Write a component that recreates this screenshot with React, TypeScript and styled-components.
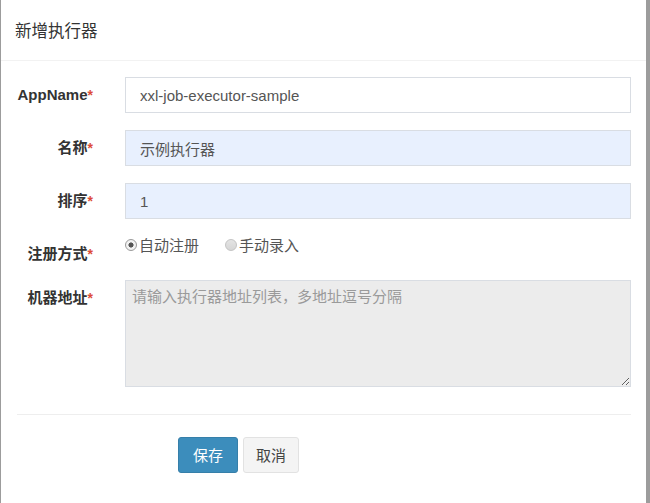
import React from "react";
import styled, { createGlobalStyle } from "styled-components";

const Global = createGlobalStyle`
  html, body { margin: 0; padding: 0; }
  body {
    background: #9c9c9c;
    font-family: "Liberation Sans", "Noto Sans CJK SC", sans-serif;
    overflow: hidden;
  }
  * { box-sizing: border-box; }
`;

const Backdrop = styled.div`
  display: flex;
  height: 503px;
  padding-left: 1px;
`;

const Modal = styled.div`
  width: 645px;
  height: 503px;
  background: #fff;
  display: flex;
  flex-direction: column;
`;

const Header = styled.div`
  height: 61px;
  padding: 0 14px;
  display: flex;
  align-items: center;
  border-bottom: 1px solid #f2f2f2;
`;

const Title = styled.h4`
  margin: 0;
  font-family: "Noto Sans CJK SC", sans-serif;
  font-size: 16.5px;
  font-weight: 400;
  color: #333;
  line-height: 20px;
`;

const Form = styled.form`
  display: flex;
  flex-direction: column;
  padding: 16px 15px 0 16px;
`;

const Group = styled.div<{ $gap: number }>`
  display: grid;
  grid-template-columns: 76px 506px;
  column-gap: 32px;
  align-items: start;
  margin-bottom: ${(p) => p.$gap}px;
`;

const Label = styled.label`
  text-align: right;
  padding-top: 8px;
  font-size: 15px;
  font-weight: 700;
  line-height: 20px;
  color: #333;
  white-space: nowrap;
`;

const Star = styled.span`
  color: #dd4b39;
  font-weight: 700;
  font-size: 14px;
`;

const Input = styled.input<{ $filled?: boolean }>`
  height: 36px;
  width: 100%;
  padding: 0 14px;
  border: 1px solid #d9dde3;
  background: ${(p) => (p.$filled ? "#e8f0fe" : "#fff")};
  font-family: "Liberation Sans", "Noto Sans CJK SC", sans-serif;
  font-size: 15px;
  color: #555;
  outline: none;
`;

const Radios = styled.div`
  display: flex;
  align-items: center;
  gap: 26px;
  height: 20px;
  margin-top: -1px;
`;

const RadioItem = styled.span`
  display: inline-flex;
  align-items: center;
  gap: 2px;
  font-family: "Noto Sans CJK SC", sans-serif;
  font-size: 15px;
  color: #555;
  line-height: 20px;
`;

const Dot = styled.span<{ $on?: boolean }>`
  width: 12px;
  height: 12px;
  border-radius: 50%;
  border: 1px solid ${(p) => (p.$on ? "#9a9a9a" : "#c4c4c4")};
  background: ${(p) =>
    p.$on
      ? "radial-gradient(circle, #555 0, #555 2.3px, #f2f2f2 2.8px)"
      : "linear-gradient(#e4e4e4, #d6d6d6)"};
  flex: none;
`;

const TextArea = styled.textarea`
  width: 100%;
  height: 107px;
  padding: 5px 6px 6px 6px;
  border: 1px solid #d9dde3;
  background: #ececec;
  font-family: "Noto Sans CJK SC", sans-serif;
  font-size: 15px;
  line-height: 20px;
  color: #555;
  outline: none;
  &::placeholder { color: #9a9a9a; }
`;

const Separator = styled.div`
  margin: 27px 15px 0 16px;
  border-top: 1px solid #eeeeee;
`;

const Buttons = styled.div`
  display: flex;
  gap: 5px;
  padding: 22px 0 0 177px;
`;

const Button = styled.button<{ $primary?: boolean }>`
  height: 36px;
  padding: 0 ${(p) => (p.$primary ? 14 : 12)}px;
  border-radius: 3px;
  border: 1px solid ${(p) => (p.$primary ? "#367fa9" : "#e2e2e2")};
  background: ${(p) => (p.$primary ? "#3c8dbc" : "#f4f4f4")};
  color: ${(p) => (p.$primary ? "#fff" : "#444")};
  font-family: "Noto Sans CJK SC", sans-serif;
  font-size: 15px;
  line-height: 20px;
  cursor: pointer;
`;

export default function App() {
  return (
    <>
      <Global />
      <Backdrop>
        <Modal>
          <Header>
            <Title>新增执行器</Title>
          </Header>
          <Form onSubmit={(e) => e.preventDefault()}>
            <Group $gap={17}>
              <Label>AppName<Star>*</Star></Label>
              <Input defaultValue="xxl-job-executor-sample" />
            </Group>
            <Group $gap={17}>
              <Label>名称<Star>*</Star></Label>
              <Input $filled defaultValue="示例执行器" />
            </Group>
            <Group $gap={17}>
              <Label>排序<Star>*</Star></Label>
              <Input $filled defaultValue="1" />
            </Group>
            <Group $gap={16}>
              <Label>注册方式<Star>*</Star></Label>
              <Radios>
                <RadioItem><Dot $on />自动注册</RadioItem>
                <RadioItem><Dot />手动录入</RadioItem>
              </Radios>
            </Group>
            <Group $gap={0}>
              <Label>机器地址<Star>*</Star></Label>
              <TextArea readOnly placeholder="请输入执行器地址列表，多地址逗号分隔" />
            </Group>
          </Form>
          <Separator />
          <Buttons>
            <Button $primary>保存</Button>
            <Button>取消</Button>
          </Buttons>
        </Modal>
      </Backdrop>
    </>
  );
}
